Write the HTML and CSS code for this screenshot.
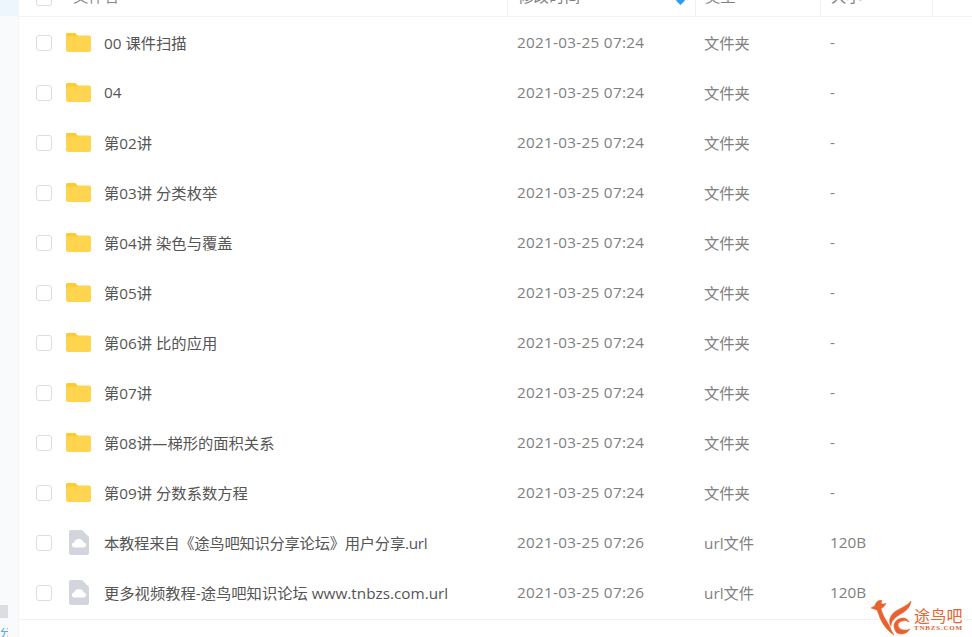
FILE: index.html
```html
<!DOCTYPE html>
<html lang="zh-CN">
<head>
<meta charset="utf-8">
<title>文件列表</title>
<link rel="stylesheet" href="styles.css">
</head>
<body>
<svg class="defs" width="0" height="0" aria-hidden="true">
  <symbol id="folder" viewBox="0 0 25 19">
    <path fill="#ffd44f" d="M0 2C0 .8.800 0 2 0h7l2.500 2.500H23c1.200 0 2 .8 2 2V17c0 1.200-.8 2-2 2H2c-1.200 0-2-.8-2-2z"/>
    <path fill="#ffc933" d="M0 2C0 .8.800 0 2 0h7l2.500 2.500.6.900H2.200C1 3.400 0 3.800 0 5z"/>
  </symbol>
  <symbol id="url" viewBox="0 0 20 25">
    <path fill="#d2d5dc" d="M2 0h11l7 7v16c0 1.200-.8 2-2 2H2c-1.200 0-2-.8-2-2V2C0 .8.800 0 2 0z"/>
    <path fill="#fff" d="M5.500 17.500c-1.500 0-2.700-1.100-2.700-2.500s1-2.400 2.300-2.500C5.600 10.500 7.500 9 9.800 9c2.500 0 4.500 1.600 5 3.600 1.300.2 2.300 1.200 2.300 2.500 0 1.300-1.200 2.400-2.600 2.400z"/>
  </symbol>
</svg>
<div class="page">
  <aside class="side">
    <div class="side-active"></div>
    <div class="side-spacer"></div>
    <div class="side-block"></div>
    <div class="side-link">分</div>
  </aside>
  <main class="main">
    <div class="head">
      <div class="cell col-check"><span class="box"></span></div>
      <div class="cell col-name head-name">文件名</div>
      <div class="cell col-time head-sep">修改时间<span class="sort"></span></div>
      <div class="cell col-type head-sep">类型</div>
      <div class="cell col-size head-sep">大小<span class="size-mark">·</span></div>
      <div class="cell head-sep head-rest"></div>
    </div>
    <div class="rows">
    <div class="row"><div class="cell col-check"><span class="box"></span></div><div class="cell col-name"><svg class="ic-folder"><use href="#folder"/></svg><span>00 课件扫描</span></div><div class="cell col-time">2021-03-25 07:24</div><div class="cell col-type">文件夹</div><div class="cell col-size">-</div></div>
    <div class="row"><div class="cell col-check"><span class="box"></span></div><div class="cell col-name"><svg class="ic-folder"><use href="#folder"/></svg><span>04</span></div><div class="cell col-time">2021-03-25 07:24</div><div class="cell col-type">文件夹</div><div class="cell col-size">-</div></div>
    <div class="row"><div class="cell col-check"><span class="box"></span></div><div class="cell col-name"><svg class="ic-folder"><use href="#folder"/></svg><span>第02讲</span></div><div class="cell col-time">2021-03-25 07:24</div><div class="cell col-type">文件夹</div><div class="cell col-size">-</div></div>
    <div class="row"><div class="cell col-check"><span class="box"></span></div><div class="cell col-name"><svg class="ic-folder"><use href="#folder"/></svg><span>第03讲 分类枚举</span></div><div class="cell col-time">2021-03-25 07:24</div><div class="cell col-type">文件夹</div><div class="cell col-size">-</div></div>
    <div class="row"><div class="cell col-check"><span class="box"></span></div><div class="cell col-name"><svg class="ic-folder"><use href="#folder"/></svg><span>第04讲 染色与覆盖</span></div><div class="cell col-time">2021-03-25 07:24</div><div class="cell col-type">文件夹</div><div class="cell col-size">-</div></div>
    <div class="row"><div class="cell col-check"><span class="box"></span></div><div class="cell col-name"><svg class="ic-folder"><use href="#folder"/></svg><span>第05讲</span></div><div class="cell col-time">2021-03-25 07:24</div><div class="cell col-type">文件夹</div><div class="cell col-size">-</div></div>
    <div class="row"><div class="cell col-check"><span class="box"></span></div><div class="cell col-name"><svg class="ic-folder"><use href="#folder"/></svg><span>第06讲 比的应用</span></div><div class="cell col-time">2021-03-25 07:24</div><div class="cell col-type">文件夹</div><div class="cell col-size">-</div></div>
    <div class="row"><div class="cell col-check"><span class="box"></span></div><div class="cell col-name"><svg class="ic-folder"><use href="#folder"/></svg><span>第07讲</span></div><div class="cell col-time">2021-03-25 07:24</div><div class="cell col-type">文件夹</div><div class="cell col-size">-</div></div>
    <div class="row"><div class="cell col-check"><span class="box"></span></div><div class="cell col-name"><svg class="ic-folder"><use href="#folder"/></svg><span>第08讲—梯形的面积关系</span></div><div class="cell col-time">2021-03-25 07:24</div><div class="cell col-type">文件夹</div><div class="cell col-size">-</div></div>
    <div class="row"><div class="cell col-check"><span class="box"></span></div><div class="cell col-name"><svg class="ic-folder"><use href="#folder"/></svg><span>第09讲 分数系数方程</span></div><div class="cell col-time">2021-03-25 07:24</div><div class="cell col-type">文件夹</div><div class="cell col-size">-</div></div>
    <div class="row"><div class="cell col-check"><span class="box"></span></div><div class="cell col-name"><svg class="ic-url"><use href="#url"/></svg><span class="tight">本教程来自《途鸟吧知识分享论坛》用户分享.url</span></div><div class="cell col-time">2021-03-25 07:26</div><div class="cell col-type">url文件</div><div class="cell col-size">120B</div></div>
    <div class="row"><div class="cell col-check"><span class="box"></span></div><div class="cell col-name"><svg class="ic-url"><use href="#url"/></svg><span>更多视频教程-途鸟吧知识论坛 www.tnbzs.com.url</span></div><div class="cell col-time">2021-03-25 07:26</div><div class="cell col-type">url文件</div><div class="cell col-size">120B</div></div>
    </div>
    <div class="foot"></div>
  </main>
</div>
<div class="mark">
  <svg class="mark-bird" viewBox="0 0 44 36">
    <g fill="#e8622f" stroke="#e8622f" stroke-width=".6">
      <path d="M1 8c2-1 3-2 4-2 0-3 3-6 7-6-1 2-1 3 0 4 2 0 3 0 4-1-1 3-3 5-5 5 1 7 6 13 9 19 1 3 2 5 4 8-6-4-11-10-14-17-1-3-2-6-3-8-2-1-4-1-6-2z"/>
      <path d="M41 1c-1 8-7 11-12 14-5 3-8 7-8 11-3-5-1-11 5-15C31 8 37 6 41 1z"/>
      <path d="M24 26c0-4 4-8 9-8 3 0 5 2 6 4-2-1-4-2-6-1-3 0-5 2-5 4 0 3 3 5 7 5 2 0 3 0 5-1-2 3-5 5-9 5-2 0-4-1-5-2-1-2-2-4-2-6z"/>
    </g>
  </svg>
  <div class="mark-text">
    <div class="mark-cn">途鸟吧</div>
    <div class="mark-en">TNBZS.COM</div>
  </div>
</div>
</body>
</html>
```

FILE: styles.css
```css
* { box-sizing: border-box; }
html, body { margin: 0; padding: 0; height: 100%; overflow: hidden; background: #fff; }
body {
  position: relative;
  font-family: "Open Sans", "Noto Sans CJK SC", sans-serif;
  font-size: 15.3px;
  color: #666;
}
.defs { position: absolute; }
.page { display: flex; height: 637px; overflow: hidden; }

.side {
  width: 19px;
  flex: none;
  display: flex;
  flex-direction: column;
  background: #f8fafc;
  border-right: 1px solid #f3f4f7;
}
.side-active { height: 16px; background: #eef6fd; }
.side-spacer { flex: 1; }
.side-block { height: 13px; width: 8px; background: #dcdde0; margin-bottom: 10px; }
.side-link { height: 9px; width: 8px; overflow: hidden; font-size: 11px; line-height: 9px; color: #39a0ea; }

.main { flex: 1; min-width: 0; margin-top: -34px; }

.head {
  display: flex;
  height: 51px;
  border-bottom: 1px solid #f2f3f5;
  color: #888;
}
.head .cell { height: 50px; align-items: flex-end; padding-bottom: 10px; }
.head-name { padding-left: 3px; }
.head-sep { border-left: 1px solid #f0f0f3; }
.head .head-rest { width: 40px; flex: none; padding: 0; }
.head .col-time { position: relative; }
.head .col-size { width: 112px; flex: none; }
.sort {
  position: absolute;
  right: 10px;
  top: 30px;
  width: 9px;
  height: 9px;
  background: #2b9cf2;
  clip-path: polygon(50% 0, 100% 50%, 50% 100%, 0 50%);
}
.size-mark { margin-left: 1px; }

.rows { margin-top: 1px; }
.row { display: flex; height: 50px; }
.row .col-name, .row .col-time, .row .col-type, .row .col-size { padding-bottom: 2px; }
.cell { display: flex; align-items: center; }
.col-check { width: 85px; flex: none; padding-left: 17px; }
.box {
  display: block;
  width: 16px;
  height: 16px;
  border: 1px solid #dcdde2;
  border-radius: 3px;
  background: #fff;
}
.col-name { width: 403px; flex: none; position: relative; color: #555; }
.tight { letter-spacing: -.25px; }
.head .col-name { color: #888; }
.col-time { width: 188px; flex: none; padding-left: 10px; color: #808080; letter-spacing: .28px; }
.col-type { width: 125px; flex: none; padding-left: 9px; color: #808080; }
.col-size { flex: 1; padding-left: 10px; color: #808080; }
.head .col-check { width: 51px; }
.head .col-name { width: 437px; }
.head .col-time { width: 188px; }
.head .col-type { width: 125px; }

.ic-folder { position: absolute; left: -38px; top: 15px; width: 25px; height: 19px; }
.ic-url { position: absolute; left: -35px; top: 12px; width: 20px; height: 25px; }

.foot { margin-top: 1px; border-top: 1px solid #f2f3f5; height: 20px; }

.mark {
  position: absolute;
  left: 870px;
  top: 600px;
  display: flex;
  align-items: flex-start;
}
.mark-bird { width: 44px; height: 36px; flex: none; }
.mark-text { padding-top: 8px; width: 50px; }
.mark-cn { font-size: 16px; line-height: 17px; color: #e8622f; letter-spacing: .3px; white-space: nowrap; }
.mark-en { font-family: "Liberation Serif", serif; font-size: 7px; line-height: 7px; font-weight: bold; color: #e8622f; letter-spacing: .8px; white-space: nowrap; }
```
